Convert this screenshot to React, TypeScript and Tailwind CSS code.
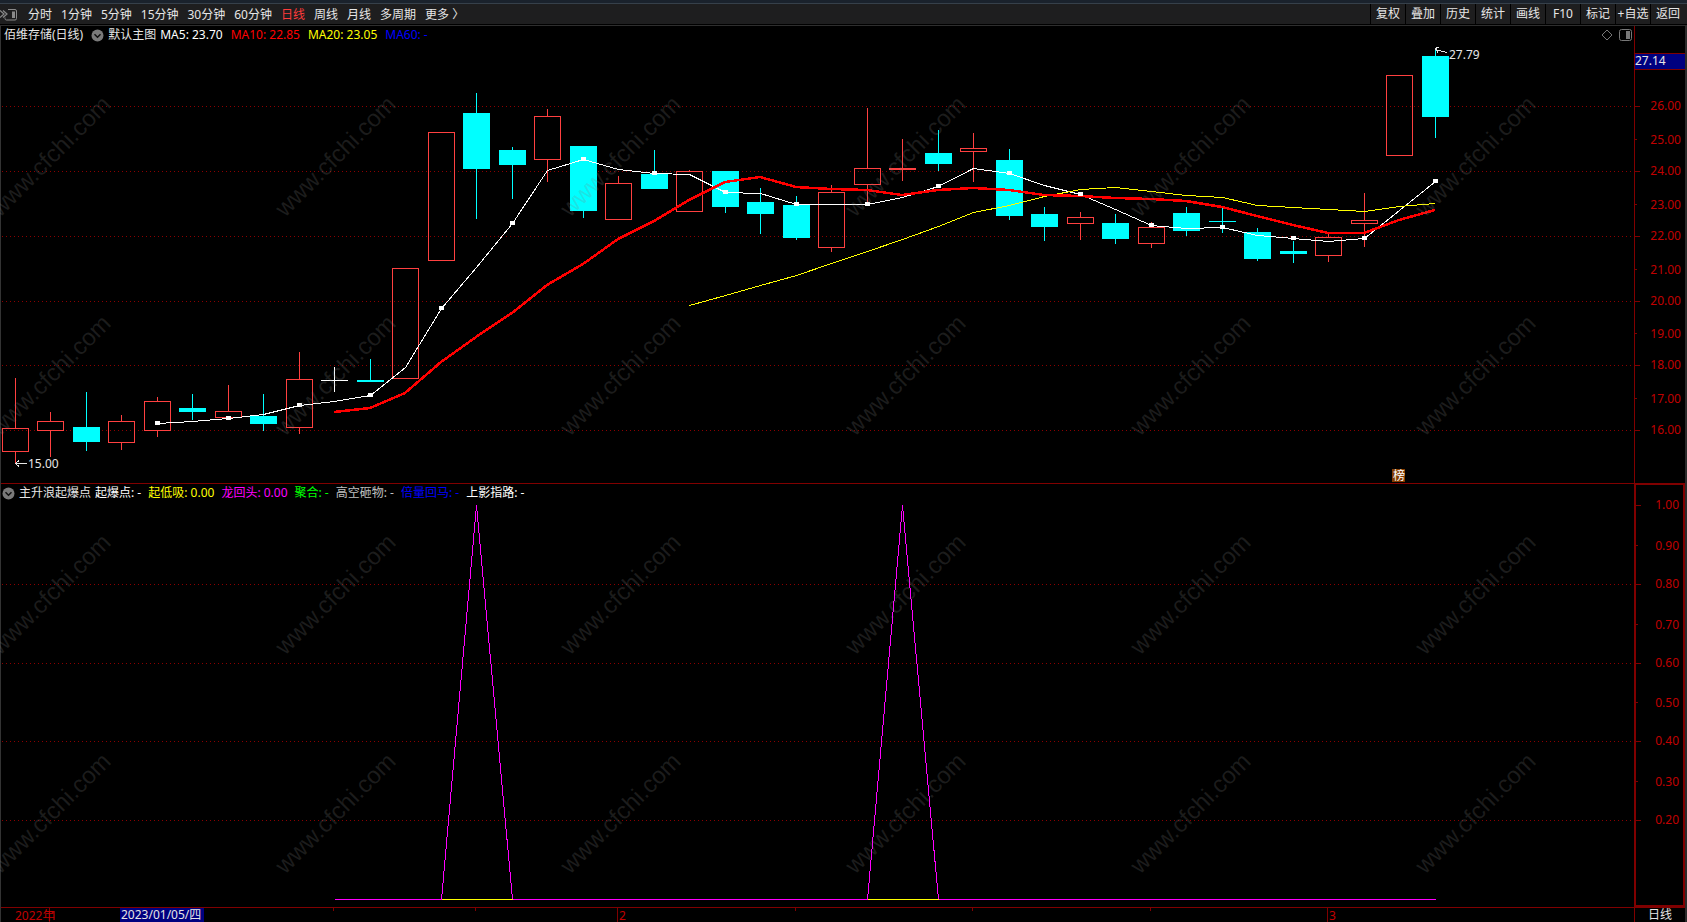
import { useLayoutEffect, useRef, useState } from "react";
import type { ReactNode } from "react";

type Kind = "up" | "down" | "flat";
// [kind, body top, body bottom, high, low] in chart units
type Candle = [Kind, number, number, number, number];

const CANDLES: Candle[] = [
    ["up", 428, 451, 378, 463],
    ["up", 421, 430, 412, 456],
    ["down", 427, 441, 392, 450],
    ["up", 421, 442, 415, 449],
    ["up", 401, 430, 397, 436],
    ["down", 408, 411, 394, 419],
    ["up", 411, 417, 385, 417],
    ["down", 416, 423, 394, 430],
    ["up", 379, 427, 352, 433],
    ["flat", 380, 380, 367, 391],
    ["down", 380, 381, 359, 381],
    ["up", 268, 378, 268, 378],
    ["up", 132, 260, 132, 260],
    ["down", 113, 168, 93, 218],
    ["down", 150, 164, 147, 198],
    ["up", 116, 159, 109, 181],
    ["down", 146, 210, 146, 217],
    ["up", 183, 219, 176, 219],
    ["down", 174, 188, 150, 188],
    ["up", 171, 211, 170, 211],
    ["down", 171, 206, 171, 212],
    ["down", 202, 213, 188, 233],
    ["down", 205, 237, 196, 239],
    ["up", 192, 247, 185, 251],
    ["up", 168, 184, 108, 203],
    ["up", 168, 169, 139, 180],
    ["down", 153, 163, 130, 170],
    ["up", 148, 151, 133, 181],
    ["down", 160, 215, 149, 219],
    ["down", 214, 226, 207, 240],
    ["up", 217, 223, 212, 239],
    ["down", 223, 238, 214, 243],
    ["up", 227, 243, 222, 247],
    ["down", 213, 230, 207, 235],
    ["down", 221, 221, 207, 232],
    ["down", 232, 258, 228, 260],
    ["down", 251, 253, 241, 262],
    ["up", 237, 255, 233, 261],
    ["up", 220, 223, 193, 246],
    ["up", 75, 155, 75, 155],
    ["down", 56, 116, 48, 137],
];

const MA5 = [
    423, 421, 418, 414, 405, 401, 395, 367, 308, 267, 223, 170, 159, 169, 173, 174, 192, 193, 204,
    204, 204, 197, 186, 168, 173, 185, 194, 209, 225, 228, 227, 235, 238, 241, 238, 210, 181,
];
const MA10 = [
    411, 407, 392, 361, 336, 312, 284, 263, 238, 220, 199, 181, 176, 186, 188, 189, 194, 189, 187,
    189, 194, 195, 197, 198, 200, 206, 215, 224, 232, 232, 219, 209,
];
const MA20 = [
    305, 295, 285, 275, 263, 251, 239, 226, 212, 205, 196, 189, 187, 191, 195, 197, 205, 207, 209,
    211, 206, 203,
];

const PRICE_TICKS = [
    { label: "26.00", y: 106 },
    { label: "25.00", y: 139 },
    { label: "24.00", y: 171 },
    { label: "23.00", y: 204 },
    { label: "22.00", y: 236 },
    { label: "21.00", y: 269 },
    { label: "20.00", y: 301 },
    { label: "19.00", y: 333 },
    { label: "18.00", y: 365 },
    { label: "17.00", y: 398 },
    { label: "16.00", y: 430 },
];

const SIGNAL_TICKS = [
    { label: "1.00", y: 505 },
    { label: "0.90", y: 545 },
    { label: "0.80", y: 584 },
    { label: "0.70", y: 624 },
    { label: "0.60", y: 663 },
    { label: "0.50", y: 702 },
    { label: "0.40", y: 741 },
    { label: "0.30", y: 781 },
    { label: "0.20", y: 820 },
];

const PERIODS = ["分时", "1分钟", "5分钟", "15分钟", "30分钟", "60分钟", "日线", "周线", "月线", "多周期", "更多 〉"];
const TOOLS = ["复权", "叠加", "历史", "统计", "画线", "F10", "标记", "+自选", "返回"];

const PRICE_LEGEND = [
    { text: "MA5: 23.70", color: "text-white" },
    { text: "MA10: 22.85", color: "text-[#ff0000]" },
    { text: "MA20: 23.05", color: "text-[#ffff00]" },
    { text: "MA60: -", color: "text-[#0000ff]" },
];

const SIGNAL_LEGEND = [
    { text: "起爆点: -", color: "text-white" },
    { text: "起低吸: 0.00", color: "text-[#ffff00]" },
    { text: "龙回头: 0.00", color: "text-[#ff00ff]" },
    { text: "聚合: -", color: "text-[#00ff00]" },
    { text: "高空砸物: -", color: "text-[#c0c0c0]" },
    { text: "倍量回马: -", color: "text-[#0000ff]" },
    { text: "上影指路: -", color: "text-white" },
];

const PLOT_W = 1633;
const UP = "#ff4040";
const DOWN = "#00ffff";
const AXIS = "#800000";
const LABEL = "#c00000";

function useSize<T extends Element>() {
    const ref = useRef<T>(null);
    const [size, setSize] = useState({ w: 0, h: 0 });

    useLayoutEffect(() => {
        const el = ref.current;
        if (!el) return;
        const read = () => {
            const r = el.getBoundingClientRect();
            setSize({ w: r.width, h: r.height });
        };
        read();
        const ro = new ResizeObserver(read);
        ro.observe(el);
        return () => ro.disconnect();
    }, []);

    return { ref, ...size };
}

type Scale = { x: (i: number) => number; y: (v: number) => number; k: number; w: number };

// Canvas whose vertical range covers the chart units from..to
function Canvas({ from, to, label, className, children }: {
    from: number;
    to: number;
    label: string;
    className?: string;
    children: (s: Scale) => ReactNode;
}) {
    const { ref, w, h } = useSize<HTMLDivElement>();
    const k = w / PLOT_W;
    const scale: Scale = {
        k,
        w,
        x: (i) => Math.floor((14 + i * 35.5) * k + 0.01),
        y: (v) => Math.round(((v - from) * h) / (to - from)),
    };

    return (
        <div ref={ref} className={`min-h-0 flex-1 ${className ?? ""}`}>
            {w > 0 && (
                <svg role="img" aria-label={label} width={w} height={h} className="block overflow-visible">
                    {children(scale)}
                </svg>
            )}
        </div>
    );
}

function Line({ data, start, s, color, width = 1 }: {
    data: number[];
    start: number;
    s: Scale;
    color: string;
    width?: number;
}) {
    return (
        <polyline
            points={data.map((v, i) => `${s.x(start + i)},${s.y(v)}`).join(" ")}
            transform={width === 1 ? "translate(0.5 0.5)" : "translate(0 1)"}
            fill="none"
            stroke={color}
            strokeWidth={width}
            shapeRendering="crispEdges"
        />
    );
}

function GridLines({ ys, s }: { ys: number[]; s: Scale }) {
    return (
        <g stroke="#8c0000" strokeDasharray="1 3" shapeRendering="crispEdges">
            {ys.map((y) => (
                <line key={y} x1={1} x2={s.w} y1={s.y(y) + 0.5} y2={s.y(y) + 0.5} />
            ))}
        </g>
    );
}

function CandleBar({ candle, x, s }: { candle: Candle; x: number; s: Scale }) {
    const [kind, top, bottom, high, low] = candle;
    const half = Math.floor(13 * s.k);
    const t = s.y(top);
    const b = s.y(bottom);
    const color = kind === "up" ? UP : kind === "down" ? DOWN : "#ffffff";

    return (
        <g fill={color} shapeRendering="crispEdges">
            <rect x={x} y={s.y(high)} width={1} height={Math.max(t - s.y(high), 0)} />
            <rect x={x} y={b} width={1} height={Math.max(s.y(low) - b + 1, 0)} />
            {kind === "up" ? (
                <rect x={x - half + 0.5} y={t + 0.5} width={half * 2} height={b - t} fill="none" stroke={color} />
            ) : (
                <rect x={x - half} y={t} width={half * 2 + 1} height={b - t + 1} />
            )}
        </g>
    );
}

function PricePlot() {
    return (
        <Canvas from={44} to={483} label="佰维存储日线">
            {(s) => (
                <>
                    <GridLines ys={PRICE_TICKS.filter((_, i) => i % 2 === 0).map((t) => t.y)} s={s} />
                    {CANDLES.map((c, i) => (
                        <CandleBar key={i} candle={c} x={s.x(i)} s={s} />
                    ))}
                    <Line data={MA5} start={4} s={s} color="#ffffff" />
                    <Line data={MA20} start={19} s={s} color="#ffff00" />
                    <Line data={MA10} start={9} s={s} color="#ff0000" width={2.5} />
                    {MA5.map((v, i) =>
                        i % 2 === 0 ? (
                            <rect key={i} x={s.x(i + 4) - 2} y={s.y(v) - 2} width={5} height={4} fill="#fff" />
                        ) : null
                    )}

                    {/* Period low and high */}
                    <g stroke="#e6e6e6" fill="none" shapeRendering="crispEdges" transform={`translate(${s.x(0)} ${s.y(463)})`}>
                        <path d="M0 .5h12M4 -2.5L.5 .5L4 3.5" />
                        <text x={13} y={5} fill="#e6e6e6" stroke="none">15.00</text>
                    </g>
                    <g stroke="#e6e6e6" fill="none" shapeRendering="crispEdges" transform={`translate(${s.x(40)} ${s.y(48)})`}>
                        <path d="M.5 1.5L12 4.5M4 -.5H1.5L.5 1.5L3 4.5" />
                        <text x={14} y={11} fill="#e6e6e6" stroke="none">27.79</text>
                    </g>

                    <g transform={`translate(${s.x(39) - 7} ${s.y(469)})`}>
                        <rect width={13} height={13} fill="#843c00" />
                        <text x={1} y={11} fill="#fff">榜</text>
                    </g>
                </>
            )}
        </Canvas>
    );
}

function SignalPlot() {
    const peaks = [13, 25];
    return (
        <Canvas from={502} to={907} label="主升浪起爆点">
            {(s) => {
                const base = s.y(899);
                const points = [
                    `${s.x(9)},${base}`,
                    ...peaks.flatMap((p) => [`${s.x(p - 1)},${base}`, `${s.x(p)},${s.y(505)}`, `${s.x(p + 1)},${base}`]),
                    `${s.x(40)},${base}`,
                ];
                return (
                    <>
                        <GridLines ys={[584, 663, 741, 820]} s={s} />
                        <g transform="translate(0.5 0.5)" fill="none" shapeRendering="crispEdges">
                            <polyline points={points.join(" ")} stroke="#ff00ff" />
                            {peaks.map((p) => (
                                <line key={p} x1={s.x(p - 1)} x2={s.x(p + 1)} y1={base} y2={base} stroke="#ffff00" />
                            ))}
                        </g>
                    </>
                );
            }}
        </Canvas>
    );
}

function AxisTicks({ ticks, s }: { ticks: { label: string; y: number }[]; s: Scale }) {
    return (
        <>
            {ticks.map((t, i) => (
                <g key={t.label}>
                    <rect y={s.y(t.y)} width={i % 2 === 0 ? 5 : 2} height={1} fill={AXIS} />
                    <text x={s.w - 4} y={s.y(t.y) + (i % 2 === 0 ? 4 : 5)} textAnchor="end" fill={LABEL}>{t.label}</text>
                </g>
            ))}
        </>
    );
}

function MenuDot({ label }: { label: string }) {
    return (
        <button type="button" aria-label={label} className="shrink-0">
            <svg width="13" height="13" viewBox="0 0 13 13" className="block">
                <circle cx="6.5" cy="6.5" r="6" fill="#7a7a7a" />
                <path d="M3.5 5.2l3 3 3-3" fill="none" stroke="#111" strokeWidth="1.5" />
            </svg>
        </button>
    );
}

function TopBar() {
    return (
        <header className="shrink-0 bg-[#1e1e1f]">
            <div className="h-1 border-b border-[#36404a] bg-[#1a222c]" />
            <div className="flex h-[21px] items-stretch justify-between border-b border-black leading-5">
                <nav className="flex items-stretch gap-[9px] pt-[1px]">
                    <button type="button" aria-label="侧栏" className="mr-[2px]">
                        <svg width="17" height="12" viewBox="0 0 17 12" fill="none" stroke="#8a8a8a" className="block">
                            <path d="M0 1.5l4 3.5-4 3.5M3 1.5L7 5 3 8.5" strokeWidth="1.2" />
                            <path d="M8 .5h7a1.5 1.5 0 011.5 1.5v7.500a1.5 1.5 0 01-1.5 1.5H6.500a1.5 1.5 0 01-1.500-1.500V8.500" />
                            <path d="M12 2.500h3v6.500h-3z" fill="#8a8a8a" stroke="none" />
                        </svg>
                    </button>
                    {PERIODS.map((p) => (
                        <button key={p} type="button" className={`whitespace-nowrap ${p === "日线" ? "text-[#ff3b3b]" : ""}`}>
                            {p}
                        </button>
                    ))}
                </nav>
                <div className="flex items-stretch pr-[2px]">
                    {TOOLS.map((t) => (
                        <button key={t} type="button" className="w-[35px] whitespace-nowrap border-l border-black text-center">
                            {t}
                        </button>
                    ))}
                </div>
            </div>
            <div className="h-[1px] bg-[#2e2e2e]" />
        </header>
    );
}

function Watermarks() {
    return (
        <svg aria-hidden="true" className="pointer-events-none absolute inset-0 h-full w-full font-['Liberation_Sans',sans-serif] text-2xl">
            <g fill="#808080" fillOpacity="0.22">
                {[218, 437, 656, 875].flatMap((y) =>
                    [0, 285, 570, 855, 1140, 1425].map((x) => (
                        <text key={`${x}-${y}`} transform={`translate(${x} ${y}) rotate(-45)`}>www.cfchi.com</text>
                    ))
                )}
            </g>
        </svg>
    );
}

export default function App() {
    return (
        <div className="relative flex h-screen flex-col overflow-hidden bg-black font-['Noto_Sans','Noto_Sans_CJK_SC',sans-serif] text-xs leading-4 text-[#e6e6e6]">
            <TopBar />

            <main className="flex min-h-0 flex-1 flex-col border-l border-r-2 border-l-[#333] border-r-[#2b2b2b]">
                {/* Daily candles */}
                <section className="flex min-h-0 flex-[457]">
                    <div className="flex min-w-0 flex-1 flex-col">
                        <div className="flex h-[18px] shrink-0 items-center gap-1 whitespace-nowrap pl-[3px] pr-[2px]">
                            <h1 className="mr-1">佰维存储(日线)</h1>
                            <MenuDot label="主图菜单" />
                            <span>默认主图</span>
                            <div className="flex flex-1 gap-2">
                                {PRICE_LEGEND.map((l) => (
                                    <span key={l.text} className={l.color}>{l.text}</span>
                                ))}
                            </div>
                            <button type="button" aria-label="标记" className="mr-[2px]">
                                <svg width="12" height="12" viewBox="0 0 12 12" fill="none" stroke="#777" className="block">
                                    <path d="M6 1l5 5-5 5-5-5z" />
                                </svg>
                            </button>
                            <button type="button" aria-label="侧栏">
                                <svg width="13" height="12" viewBox="0 0 13 12" fill="none" stroke="#777" className="block">
                                    <rect x=".5" y=".5" width="12" height="11" rx="2" />
                                    <path d="M7 2h4v8H7z" fill="#777" stroke="none" />
                                </svg>
                            </button>
                        </div>
                        <PricePlot />
                    </div>
                    <div className="flex w-[51px] shrink-0 flex-col border-l border-[#800000]">
                        <Canvas from={26} to={483} label="价格">
                            {(s) => (
                                <>
                                    <AxisTicks ticks={PRICE_TICKS} s={s} />
                                    <g transform={`translate(0 ${s.y(53)})`}>
                                        <rect width={s.w} height={17} fill={AXIS} />
                                        <rect y={1} width={s.w} height={15} fill="#000080" />
                                        <text y={12} fill="#e6e6e6">27.14</text>
                                    </g>
                                </>
                            )}
                        </Canvas>
                    </div>
                </section>

                {/* Signal indicator */}
                <section className="flex min-h-0 flex-[423] border-t border-[#800000]">
                    <div className="flex min-w-0 flex-1 flex-col">
                        <div className="flex h-[18px] shrink-0 items-center gap-1 whitespace-nowrap pl-[1px]">
                            <MenuDot label="副图菜单" />
                            <h2>主升浪起爆点</h2>
                            <div className="flex gap-[7px]">
                                {SIGNAL_LEGEND.map((l) => (
                                    <span key={l.text} className={l.color}>{l.text}</span>
                                ))}
                            </div>
                        </div>
                        <SignalPlot />
                    </div>
                    <div className="flex w-[51px] shrink-0 flex-col border-x-2 border-b-2 border-t border-[#800000]">
                        <Canvas from={485} to={905} label="指标">
                            {(s) => <AxisTicks ticks={SIGNAL_TICKS} s={s} />}
                        </Canvas>
                    </div>
                </section>

                {/* Dates */}
                <footer className="flex h-[15px] shrink-0 border-t border-[#800000]">
                    <Canvas from={0} to={14} label="日期" className="min-w-0">
                        {(s) => (
                            <g fill={LABEL}>
                                {[9, 13, 22, 27, 32].map((i) => (
                                    <rect key={i} x={s.x(i) - 1} width={1} height={3} fill={AXIS} />
                                ))}
                                {[1, 17, 37].map((i) => (
                                    <rect key={i} x={s.x(i) - 1} width={1} height={14} fill={AXIS} />
                                ))}
                                <text x={s.x(0)} y={12}>2022年</text>
                                <text x={s.x(1)} y={12}>1</text>
                                <text x={s.x(17) + 1} y={12}>2</text>
                                <text x={s.x(37) + 1} y={12}>3</text>
                                <rect x={s.x(3) - 1} width={84} height={14} fill="#000080" />
                                <text x={s.x(3)} y={11} fill="#e6e6e6">2023/01/05/四</text>
                            </g>
                        )}
                    </Canvas>
                    <button type="button" className="w-[51px] shrink-0 border-l border-[#800000] leading-[14px]">日线</button>
                </footer>
            </main>

            <Watermarks />
        </div>
    );
}
